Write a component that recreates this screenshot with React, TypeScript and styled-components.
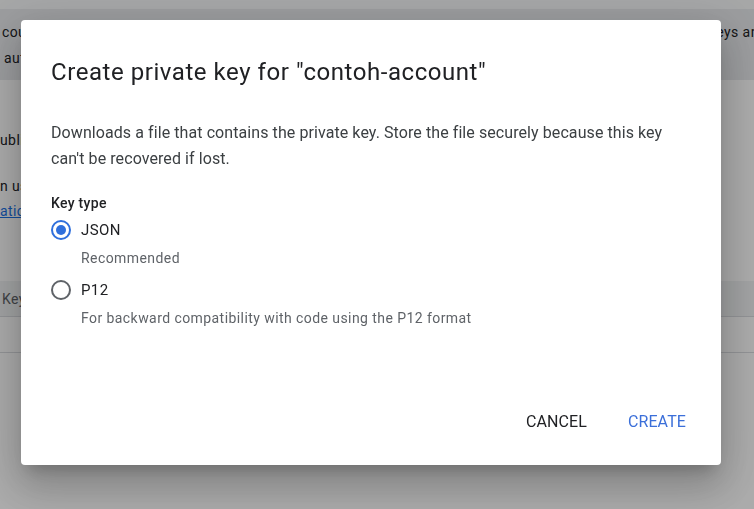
import React from "react";
import styled, { createGlobalStyle } from "styled-components";

const Global = createGlobalStyle`
  html, body { margin: 0; padding: 0; }
  body {
    width: 754px;
    height: 509px;
    overflow: hidden;
    background: #ffffff;
    font-family: Roboto, "Liberation Sans", Arial, sans-serif;
    color: #202124;
  }
`;

const Page = styled.div`
  width: 754px;
  height: 509px;
  overflow: hidden;
  display: flex;
  flex-direction: column;
`;

const TopBar = styled.div`
  height: 9px;
  background: #f8f9fa;
  flex: none;
`;

const Banner = styled.div`
  height: 71px;
  background: #e8eaed;
  display: flex;
  flex-direction: column;
  justify-content: center;
  gap: 8px;
  font-size: 14px;
  line-height: 18px;
  letter-spacing: 0.4px;
  color: #202124;
  flex: none;
`;

const BannerLine = styled.div`
  display: grid;
  grid-template-columns: 709px 200px;
  white-space: nowrap;
  overflow: hidden;
`;

const Clip = styled.span<{ $shift?: number }>`
  display: block;
  overflow: hidden;
  padding-left: ${(p) => p.$shift ?? 0}px;
`;

const Section = styled.div`
  padding-top: 50px;
  display: flex;
  flex-direction: column;
  font-size: 14px;
  line-height: 20px;
  letter-spacing: 0.4px;
  color: #202124;
  white-space: nowrap;
`;

const PageLine = styled.div<{ $gap?: number }>`
  margin-top: ${(p) => p.$gap ?? 0}px;
  overflow: hidden;
`;

const PageLink = styled.a`
  color: #1a73e8;
  text-decoration: underline;
`;

const TableHeader = styled.div`
  margin-top: 60px;
  height: 35px;
  background: #f1f3f4;
  border-bottom: 1px solid #dadce0;
  display: flex;
  align-items: center;
  padding-left: 2px;
  font-size: 14px;
  letter-spacing: 0.4px;
  color: #5f6368;
  white-space: nowrap;
`;

const TableRow = styled.div`
  height: 35px;
  border-bottom: 1px solid #dadce0;
`;

const Overlay = styled.div`
  position: fixed;
  inset: 0;
  background: rgba(0, 0, 0, 0.33);
  display: flex;
  align-items: flex-start;
  justify-content: flex-start;
  padding: 20px 0 0 21px;
`;

const Dialog = styled.div`
  width: 700px;
  height: 445px;
  background: #ffffff;
  border-radius: 4px;
  box-shadow: 0 11px 15px -7px rgba(0, 0, 0, 0.2), 0 24px 38px 3px rgba(0, 0, 0, 0.14),
    0 9px 46px 8px rgba(0, 0, 0, 0.12);
  display: flex;
  flex-direction: column;
  box-sizing: border-box;
  padding: 0 0 0 30px;
`;

const Title = styled.h2`
  margin: 0;
  padding-top: 36px;
  font-size: 24px;
  line-height: 32px;
  font-weight: 400;
  letter-spacing: 0.55px;
  color: #202124;
`;

const Body = styled.p`
  margin: 32px 0 0 0;
  width: 640px;
  font-size: 16px;
  line-height: 26px;
  letter-spacing: 0.08px;
  color: #3c4043;
`;

const FieldLabel = styled.div`
  margin-top: 22px;
  font-size: 14px;
  line-height: 18px;
  font-weight: 500;
  letter-spacing: 0.3px;
  color: #202124;
`;

const Options = styled.div`
  margin-top: 6px;
  display: flex;
  flex-direction: column;
`;

const Option = styled.label`
  display: grid;
  grid-template-columns: 20px 1fr;
  column-gap: 10px;
  align-items: center;
  cursor: pointer;
`;

const Radio = styled.span<{ $checked?: boolean }>`
  width: 20px;
  height: 20px;
  box-sizing: border-box;
  border-radius: 50%;
  border: 2px solid ${(p) => (p.$checked ? "#2f6fdc" : "#5f6368")};
  display: flex;
  align-items: center;
  justify-content: center;
  &::after {
    content: "";
    width: 10px;
    height: 10px;
    border-radius: 50%;
    background: ${(p) => (p.$checked ? "#2f6fdc" : "transparent")};
  }
`;

const OptionLabel = styled.span`
  font-size: 15px;
  line-height: 24px;
  letter-spacing: 0.4px;
  color: #202124;
`;

const Hint = styled.span`
  grid-column: 2;
  font-size: 14px;
  line-height: 20px;
  letter-spacing: 0.43px;
  color: #5f6368;
  margin-top: 6px;
  margin-bottom: 10px;
`;

const Actions = styled.div`
  margin-top: auto;
  display: flex;
  justify-content: flex-end;
  gap: 25px;
  padding: 0 27px 26px 0;
`;

const Button = styled.button<{ $primary?: boolean }>`
  height: 36px;
  padding: 0 8px;
  border: none;
  background: transparent;
  border-radius: 4px;
  font-family: Roboto, "Liberation Sans", Arial, sans-serif;
  font-size: 16px;
  font-weight: 400;
  letter-spacing: 0.1px;
  text-transform: uppercase;
  color: ${(p) => (p.$primary ? "#3b6fd9" : "#202124")};
  cursor: pointer;
`;

export default function App() {
  return (
    <>
      <Global />
      <Page>
        <TopBar />
        <Banner>
          <BannerLine>
            <Clip $shift={2}>could pose a security risk if compromised. We recommend you avoid downloading service account</Clip>
            <Clip>keys and instead use Workload Identity Federation.</Clip>
          </BannerLine>
          <BannerLine>
            <Clip $shift={4}>authenticate service accounts on Google Cloud here.</Clip>
            <Clip />
          </BannerLine>
        </Banner>
        <Section>
          <PageLine>ublic key certificate from an existing key pair.</PageLine>
          <PageLine $gap={26}>n using organization policies.</PageLine>
          <PageLine $gap={5}>
            <PageLink>ation policies for service accounts</PageLink>
          </PageLine>
        </Section>
        <TableHeader>Key creation date</TableHeader>
        <TableRow />
      </Page>
      <Overlay>
        <Dialog role="dialog">
          <Title>Create private key for "contoh-account"</Title>
          <Body>
            Downloads a file that contains the private key. Store the file securely because this key
            can't be recovered if lost.
          </Body>
          <FieldLabel>Key type</FieldLabel>
          <Options>
            <Option>
              <Radio $checked />
              <OptionLabel>JSON</OptionLabel>
              <Hint>Recommended</Hint>
            </Option>
            <Option>
              <Radio />
              <OptionLabel>P12</OptionLabel>
              <Hint>For backward compatibility with code using the P12 format</Hint>
            </Option>
          </Options>
          <Actions>
            <Button>Cancel</Button>
            <Button $primary>Create</Button>
          </Actions>
        </Dialog>
      </Overlay>
    </>
  );
}
